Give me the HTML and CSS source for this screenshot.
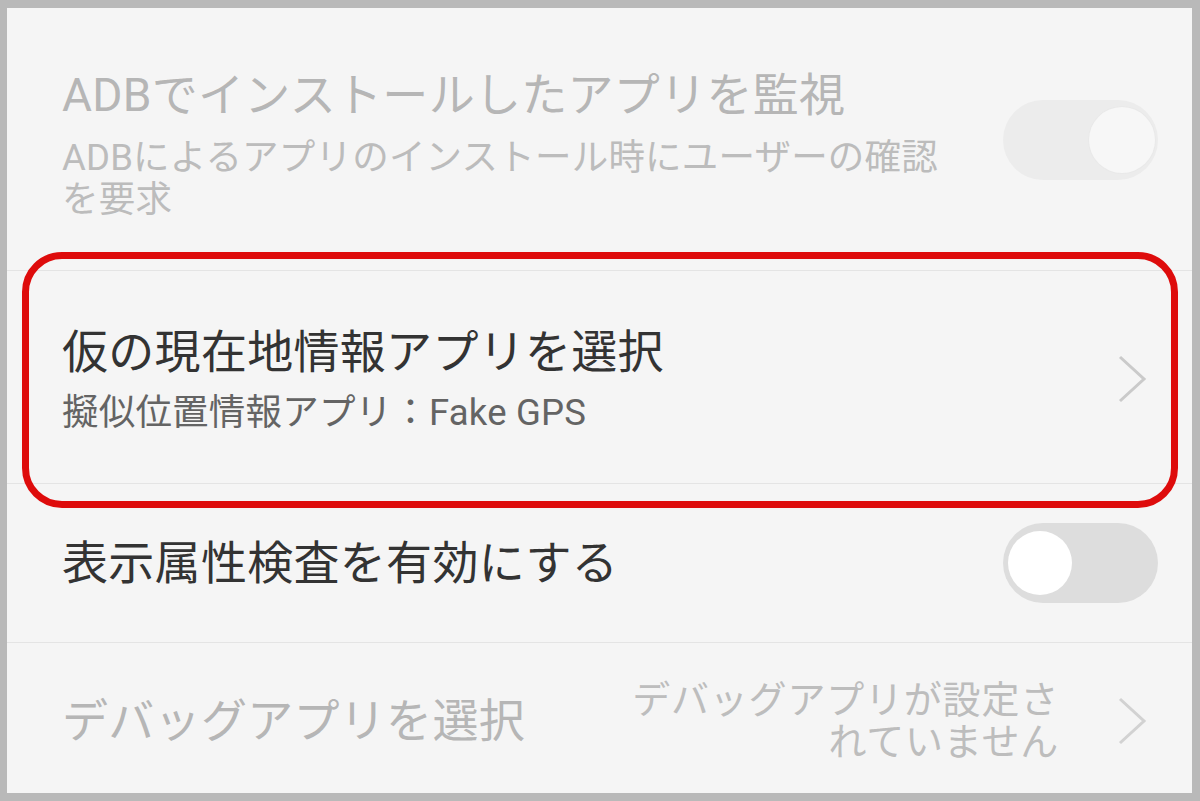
FILE: index.html
```html
<!DOCTYPE html>
<html lang="ja">
<head>
<meta charset="utf-8">
<title>開発者向けオプション</title>
<link rel="stylesheet" href="styles.css">
</head>
<body>
<div class="frame">
  <div class="panel">
    <div class="row row-adb">
      <div class="texts">
        <div class="title disabled">ADBでインストールしたアプリを監視</div>
        <div class="sub disabled">ADBによるアプリのインストール時にユーザーの確認<br>を要求</div>
      </div>
      <div class="toggle toggle-on-disabled"><span class="knob"></span></div>
    </div>
    <div class="divider"></div>
    <div class="row row-mock">
      <div class="texts">
        <div class="title">仮の現在地情報アプリを選択</div>
        <div class="sub">擬似位置情報アプリ：Fake GPS</div>
      </div>
      <svg class="chevron" viewBox="0 0 30 50" width="30" height="50"><polyline points="3,3 27,25 3,47" fill="none" stroke="#cacaca" stroke-width="3"/></svg>
    </div>
    <div class="divider"></div>
    <div class="row row-attr">
      <div class="texts">
        <div class="title">表示属性検査を有効にする</div>
      </div>
      <div class="toggle toggle-off"><span class="knob"></span></div>
    </div>
    <div class="divider"></div>
    <div class="row row-debug">
      <div class="texts">
        <div class="title disabled">デバッグアプリを選択</div>
      </div>
      <div class="value disabled">
        <div class="value-line">デバッグアプリが設定さ</div>
        <div class="value-line">れていません</div>
      </div>
      <svg class="chevron" viewBox="0 0 30 50" width="30" height="50"><polyline points="3,3 27,25 3,47" fill="none" stroke="#d2d2d2" stroke-width="3"/></svg>
    </div>
    <div class="highlight"></div>
  </div>
</div>
</body>
</html>
```

FILE: styles.css
```css
html, body {
  margin: 0;
  padding: 0;
}
body {
  width: 1200px;
  height: 801px;
  background: #b9b9b9;
  font-family: Roboto, "Noto Sans CJK JP", sans-serif;
  overflow: hidden;
}
.frame {
  padding: 8px 8px 8px 7px;
  box-sizing: border-box;
  width: 1200px;
  height: 801px;
}
.panel {
  position: relative;
  width: 1185px;
  height: 785px;
  background: #f5f5f5;
  display: flex;
  flex-direction: column;
}
.row {
  display: flex;
  align-items: center;
  padding-left: 55px;
  padding-right: 34px;
  box-sizing: border-box;
}
.texts {
  flex: 1;
  display: flex;
  flex-direction: column;
}
.title {
  font-size: 46px;
  line-height: 56px;
  color: #333333;
  white-space: nowrap;
  letter-spacing: 0.3px;
}
.sub {
  font-size: 36.5px;
  line-height: 42px;
  color: #646464;
  margin-top: 12px;
  letter-spacing: 0.2px;
}
.title.disabled {
  color: #b6b6b6;
}
.sub.disabled {
  color: #bcbcbc;
  margin-top: 14px;
}
.divider {
  height: 1px;
  background: #e4e4e4;
  flex: none;
}
.row-adb {
  height: 262px;
  align-items: flex-start;
  padding-top: 59px;
}
.row-adb .toggle {
  margin-top: 33px;
}
.row-mock {
  height: 212px;
  padding-top: 4px;
  padding-right: 45px;
}
.row-attr {
  height: 158px;
}
.row-debug {
  flex: 1;
  padding-top: 5px;
  padding-right: 45px;
}
.toggle {
  width: 155px;
  height: 80px;
  border-radius: 40px;
  position: relative;
  flex: none;
  display: flex;
  align-items: center;
  box-sizing: border-box;
}
.toggle-on-disabled {
  background: #ececec;
  justify-content: flex-end;
  padding-right: 3px;
}
.toggle-on-disabled .knob {
  width: 66px;
  height: 66px;
  border-radius: 50%;
  background: #f7f7f7;
  box-shadow: 0 0 0 1px #e9e9e9;
}
.toggle-off {
  background: #dddddd;
  justify-content: flex-start;
  padding-left: 5px;
}
.toggle-off .knob {
  width: 64px;
  height: 64px;
  border-radius: 50%;
  background: #ffffff;
}
.chevron {
  flex: none;
  display: block;
}
.value {
  display: flex;
  flex-direction: column;
  align-items: flex-end;
  font-size: 38px;
  letter-spacing: 0.8px;
  color: #bdbdbd;
  margin-right: 58px;
}
.value-line {
  line-height: 42px;
  white-space: nowrap;
}
.highlight {
  position: absolute;
  left: 15px;
  top: 244px;
  width: 1156px;
  height: 256px;
  box-sizing: border-box;
  border: 7px solid #de0c0c;
  border-radius: 40px;
  pointer-events: none;
}
```
